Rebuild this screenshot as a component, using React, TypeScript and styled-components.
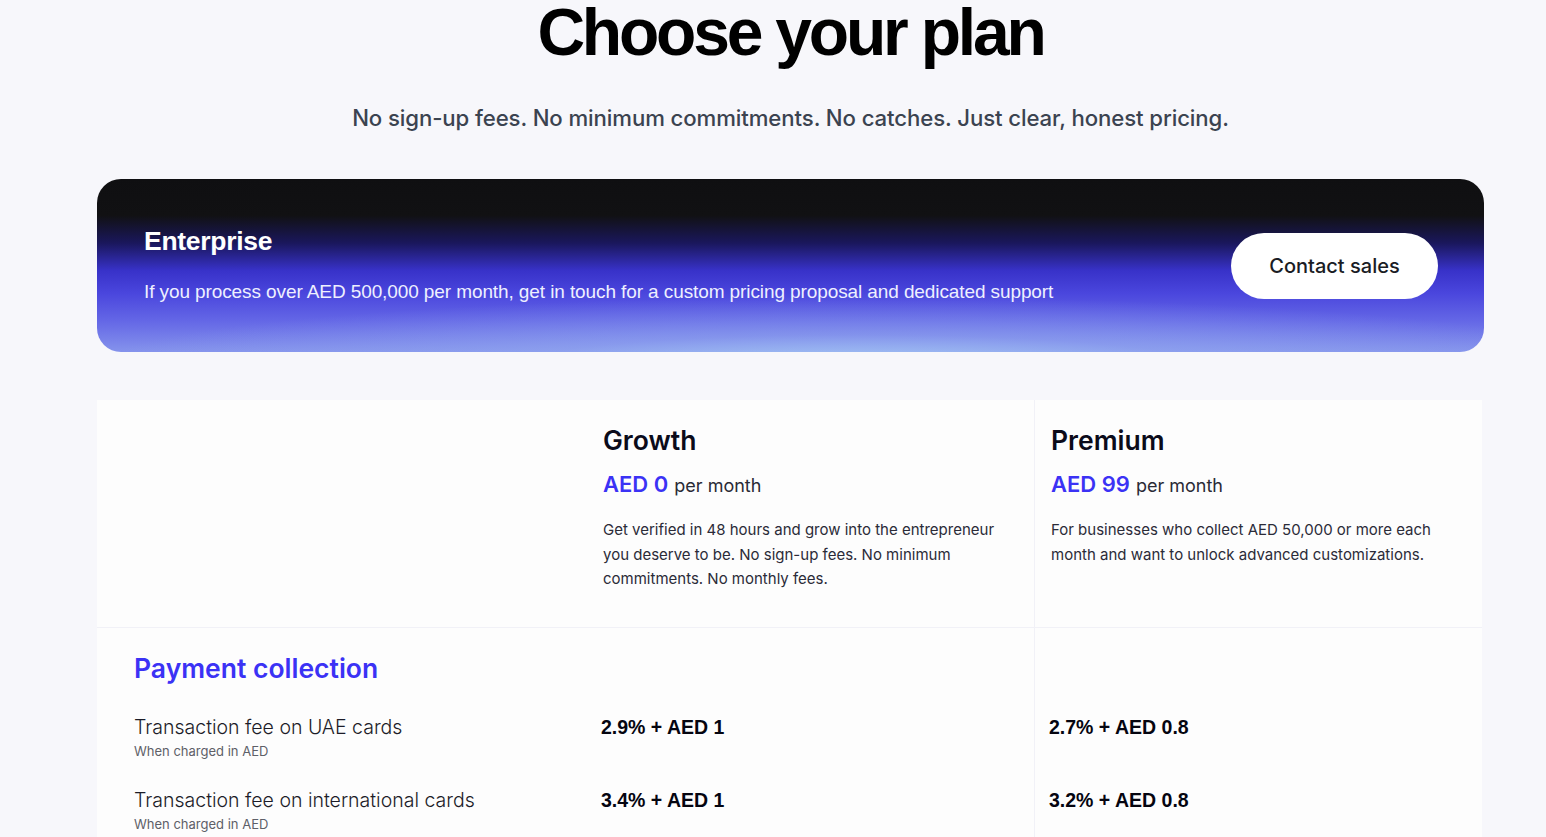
import React from "react";
import styled, { createGlobalStyle } from "styled-components";

const GlobalStyle = createGlobalStyle`
  * { box-sizing: border-box; }
  html, body {
    margin: 0;
    padding: 0;
    background: #f7f7fb;
    font-family: "Inter", "Liberation Sans", sans-serif;
    color: #0b0b1a;
  }
`;

const Page = styled.div`
  width: 1387px;
  margin-left: 97px;
  padding-bottom: 40px;
`;

const Hero = styled.header`
  display: flex;
  flex-direction: column;
  align-items: center;
  margin-top: -8px;
`;

const Title = styled.h1`
  margin: 0;
  font-family: "Liberation Sans", sans-serif;
  font-size: 66px;
  line-height: 80px;
  font-weight: 700;
  letter-spacing: -3.2px;
  color: #000;
`;

const Subtitle = styled.p`
  margin: 31px 0 0;
  font-family: "Inter", sans-serif;
  font-size: 22.2px;
  line-height: 30px;
  font-weight: 500;
  letter-spacing: -0.1px;
  color: #3b4350;
`;

const Banner = styled.section`
  margin-top: 46px;
  height: 173px;
  border-radius: 24px;
  padding: 0 46px 0 47px;
  display: flex;
  align-items: center;
  justify-content: space-between;
  color: #fff;
  background:
    radial-gradient(ellipse 55% 40% at 55% 108%, rgba(170, 210, 245, 0.85) 0%, rgba(150, 175, 240, 0.45) 45%, rgba(120, 130, 235, 0) 100%),
    linear-gradient(180deg, #0f0f11 0%, #111113 21%, #1a175c 37%, #3832c9 53%, #4a46dd 66%, #6467e6 82%, #8593ec 100%);
`;

const BannerText = styled.div`
  display: flex;
  flex-direction: column;
  gap: 22px;
  padding-bottom: 1px;
`;

const BannerTitle = styled.h2`
  margin: 0;
  font-family: "Liberation Sans", sans-serif;
  font-size: 26.5px;
  line-height: 32px;
  font-weight: 700;
  letter-spacing: -0.3px;
`;

const BannerCopy = styled.p`
  margin: 0;
  font-family: "Liberation Sans", sans-serif;
  font-size: 19px;
  line-height: 26px;
  letter-spacing: -0.1px;
  color: #eef0ff;
`;

const PillButton = styled.button`
  width: 207px;
  height: 66px;
  border: none;
  border-radius: 33px;
  background: #fff;
  color: #1a1c24;
  font-family: "Inter", sans-serif;
  font-size: 20px;
  font-weight: 500;
  cursor: pointer;
`;

const Table = styled.section`
  margin-top: 48px;
  width: 1385px;
  background: #fdfdfd;
  display: grid;
  grid-template-columns: 489px 448px 448px;
`;

const Cell = styled.div<{ $divider?: boolean; $bottom?: boolean }>`
  padding: 0 16px 0 17px;
  border-left: ${(p) => (p.$divider ? "1px solid #f1f1f7" : "none")};
  border-bottom: ${(p) => (p.$bottom ? "1px solid #f1f1f7" : "none")};
`;

const PlanCell = styled(Cell)`
  padding: 24px 16px 35px ${(p) => (p.$divider ? "16px" : "17px")};
`;

const PlanName = styled.h3`
  margin: 0;
  font-size: 26.5px;
  line-height: 32px;
  font-weight: 600;
  color: #0b0b1a;
`;

const PriceLine = styled.div`
  margin-top: 15px;
  display: flex;
  align-items: baseline;
  gap: 6px;
`;

const Price = styled.span`
  font-size: 22px;
  font-weight: 600;
  color: #3b32f5;
`;

const Per = styled.span`
  font-size: 18px;
  font-weight: 400;
  color: #2a2a35;
`;

const PlanDesc = styled.p`
  margin: 21px 0 0;
  font-size: 15px;
  line-height: 24.5px;
  color: #2b2b38;
  max-width: 400px;
`;

const SectionCell = styled(Cell)`
  padding: 23px 16px 13px 37px;
`;

const SectionTitle = styled.h3`
  margin: 0;
  font-size: 26.5px;
  line-height: 34px;
  font-weight: 600;
  color: #3b32f5;
`;

const FeeLabel = styled.div`
  padding: 16px 16px 11px 37px;
`;

const FeeName = styled.div`
  font-size: 19.5px;
  line-height: 26px;
  font-weight: 300;
  color: #1c1c28;
`;

const FeeNote = styled.div`
  margin-top: 2px;
  font-size: 13px;
  line-height: 18px;
  color: #5e6068;
`;

const FeeValue = styled(Cell)`
  padding: 16px 16px 0 ${(p) => (p.$divider ? "14px" : "15px")};
  font-family: "Liberation Sans", sans-serif;
  font-size: 19.5px;
  line-height: 26px;
  font-weight: 700;
  color: #050510;
`;

const plans = [
  {
    name: "Growth",
    price: "AED 0",
    desc: "Get verified in 48 hours and grow into the entrepreneur you deserve to be. No sign-up fees. No minimum commitments. No monthly fees.",
  },
  {
    name: "Premium",
    price: "AED 99",
    desc: "For businesses who collect AED 50,000 or more each month and want to unlock advanced customizations.",
  },
];

const fees = [
  { name: "Transaction fee on UAE cards", note: "When charged in AED", values: ["2.9% + AED 1", "2.7% + AED 0.8"] },
  { name: "Transaction fee on international cards", note: "When charged in AED", values: ["3.4% + AED 1", "3.2% + AED 0.8"] },
];

const App = () => {
  return (
    <>
      <GlobalStyle />
      <Page>
        <Hero>
          <Title>Choose your plan</Title>
          <Subtitle>No sign-up fees. No minimum commitments. No catches. Just clear, honest pricing.</Subtitle>
        </Hero>

        <Banner>
          <BannerText>
            <BannerTitle>Enterprise</BannerTitle>
            <BannerCopy>
              If you process over AED 500,000 per month, get in touch for a custom pricing proposal and dedicated support
            </BannerCopy>
          </BannerText>
          <PillButton>Contact sales</PillButton>
        </Banner>

        <Table>
          <Cell $bottom />
          {plans.map((plan, i) => (
            <PlanCell key={plan.name} $divider={i === 1} $bottom>
              <PlanName>{plan.name}</PlanName>
              <PriceLine>
                <Price>{plan.price}</Price>
                <Per>per month</Per>
              </PriceLine>
              <PlanDesc>{plan.desc}</PlanDesc>
            </PlanCell>
          ))}

          <SectionCell>
            <SectionTitle>Payment collection</SectionTitle>
          </SectionCell>
          <Cell />
          <Cell $divider />

          {fees.map((fee) => (
            <React.Fragment key={fee.name}>
              <FeeLabel>
                <FeeName>{fee.name}</FeeName>
                <FeeNote>{fee.note}</FeeNote>
              </FeeLabel>
              <FeeValue>{fee.values[0]}</FeeValue>
              <FeeValue $divider>{fee.values[1]}</FeeValue>
            </React.Fragment>
          ))}
        </Table>
      </Page>
    </>
  );
};

export default App;
